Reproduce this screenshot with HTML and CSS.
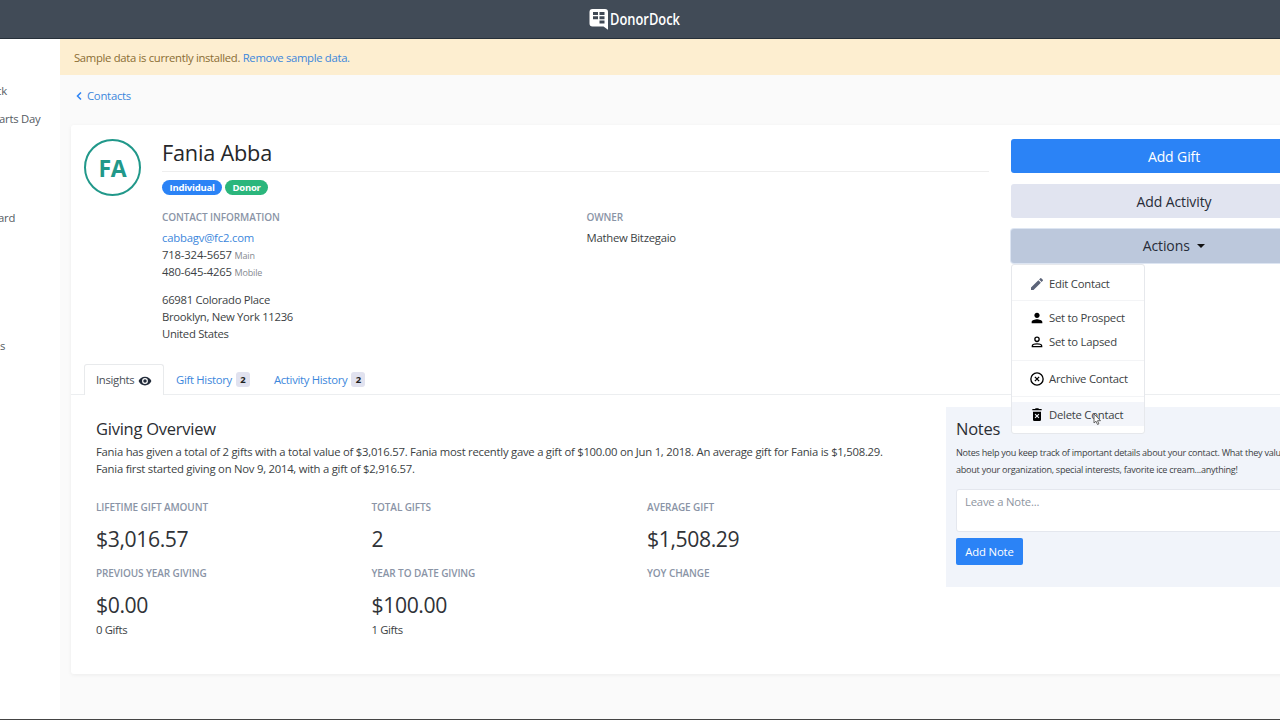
FILE: index.html
```html
<!DOCTYPE html>
<html lang="en">

<head>
    <meta charset="UTF-8">
    <meta name="viewport" content="width=device-width, initial-scale=1.0">
    <title>Fania Abba - DonorDock</title>
    <link rel="stylesheet" href="styles.css">
</head>

<body>

    <header class="navbar">
        <svg class="logo" width="92" height="24" viewBox="0 0 92 24">
            <path fill="#fff" d="M3.500 2h12.500a3 3 0 0 1 3 3v17.800l-4.500-3.300h-11a3 3 0 0 1-3-3v-11.500a3 3 0 0 1 3-3z" />
            <path fill="#3f4854" d="M4 5h5v3h-5zM10.500 5h5v3h-5zM4 9.300h5v3h-5zM10.500 9.300h5v3h-5zM10.500 13.600h5v3h-5z" />
            <text x="21" y="17.500" textLength="70" lengthAdjust="spacingAndGlyphs">DonorDock</text>
        </svg>
    </header>

    <div class="wrapper">
        <nav class="sidebar">
            <a class="side-link">ck</a>
            <a class="side-link">arts Day</a>
            <a class="side-link group-two">ard</a>
            <a class="side-link group-three">s</a>
        </nav>

        <main class="content">
            <div class="alert">Sample data is currently installed. <a href="#">Remove sample data.</a></div>

            <a href="#" class="back-link">
                <svg width="6" height="8" viewBox="0 0 6 8"><path d="M5 .5L1.500 4L5 7.500" fill="none" stroke="#2b83f6" stroke-width="1.500" /></svg>
                Contacts
            </a>

            <section class="card">
                <div class="profile">
                    <div class="avatar">FA</div>
                    <div class="details">
                        <h1>Fania Abba</h1>
                        <div class="badges">
                            <span class="badge blue">Individual</span>
                            <span class="badge green">Donor</span>
                        </div>
                        <div class="info">
                            <div class="info-col">
                                <h6>CONTACT INFORMATION</h6>
                                <a href="#" class="email">cabbagv@fc2.com</a>
                                <div class="phone">718-324-5657 <small>Main</small></div>
                                <div class="phone">480-645-4265 <small>Mobile</small></div>
                                <address>66981 Colorado Place<br>Brooklyn, New York 11236<br>United States</address>
                            </div>
                            <div class="info-col">
                                <h6>OWNER</h6>
                                <div class="owner">Mathew Bitzegaio</div>
                            </div>
                        </div>
                    </div>
                    <div class="actions">
                        <button class="btn primary">Add Gift</button>
                        <button class="btn light">Add Activity</button>
                        <div class="dropdown">
                            <button class="btn open">Actions <span class="caret"></span></button>
                            <div class="menu">
                                <a class="item">
                                    <svg width="16" height="16" viewBox="0 0 24 24" fill="#5c6479"><path d="M3 17.250V21h3.750L17.810 9.940l-3.750-3.750L3 17.250zM20.710 7.040a1 1 0 0 0 0-1.410l-2.340-2.340a1 1 0 0 0-1.410 0l-1.830 1.830 3.750 3.750 1.830-1.830z" /></svg>
                                    Edit Contact
                                </a>
                                <hr>
                                <a class="item">
                                    <svg width="16" height="16" viewBox="0 0 24 24"><path d="M12 12c2.210 0 4-1.790 4-4s-1.790-4-4-4-4 1.790-4 4 1.790 4 4 4zm0 2c-2.670 0-8 1.340-8 4v2h16v-2c0-2.660-5.330-4-8-4z" /></svg>
                                    Set to Prospect
                                </a>
                                <a class="item">
                                    <svg width="16" height="16" viewBox="0 0 24 24" fill="none" stroke="#000" stroke-width="2"><circle cx="12" cy="8" r="3.200" /><path d="M5 19v-1c0-2 4-3.200 7-3.200s7 1.200 7 3.200v1z" /></svg>
                                    Set to Lapsed
                                </a>
                                <hr class="second">
                                <a class="item">
                                    <svg width="16" height="16" viewBox="0 0 24 24" fill="none" stroke="#000" stroke-width="2"><circle cx="12" cy="12" r="9.200" /><path d="M8.800 8.800l6.400 6.400M15.200 8.800l-6.400 6.400" /></svg>
                                    Archive Contact
                                </a>
                                <hr class="third">
                                <a class="item active">
                                    <svg width="16" height="16" viewBox="0 0 24 24"><path fill-rule="evenodd" d="M5 3h4l1-1h4l1 1h4v2H5zM6 7h12v12a2 2 0 0 1-2 2H8a2 2 0 0 1-2-2zM8.500 11.200L10.800 13.500 8.500 15.800 9.700 17 12 14.700 14.300 17 15.500 15.800 13.200 13.500 15.500 11.200 14.300 10 12 12.300 9.700 10z" /></svg>
                                    Delete Contact
                                </a>
                                <svg class="cursor" width="9" height="13" viewBox="0 0 9 13"><path d="M1 1v9l2-1.800 1.500 3.300 1.400-.6-1.400-3.200h3z" fill="#fff" stroke="#555" stroke-width=".9" /></svg>
                            </div>
                        </div>
                    </div>
                </div>

                <div class="tabs">
                    <a class="tab current">Insights
                        <svg width="14" height="14" viewBox="0 0 24 24" fill="#222b3a"><path d="M12 4.500C7 4.500 2.730 7.610 1 12c1.730 4.390 6 7.500 11 7.500s9.270-3.110 11-7.500c-1.730-4.390-6-7.500-11-7.500zM12 17a5 5 0 1 1 0-10 5 5 0 0 1 0 10zm0-8a3 3 0 1 0 0 6 3 3 0 0 0 0-6z" /></svg>
                    </a>
                    <a class="tab">Gift History <span class="count">2</span></a>
                    <a class="tab">Activity History <span class="count">2</span></a>
                </div>

                <div class="tab-content">
                    <div class="overview">
                        <h2>Giving Overview</h2>
                        <p>Fania has given a total of 2 gifts with a total value of $3,016.57. Fania most recently gave a gift of $100.00 on Jun 1, 2018. An average gift for Fania is $1,508.29.<br>Fania first started giving on Nov 9, 2014, with a gift of $2,916.57.</p>
                        <div class="stats">
                            <div class="stat">
                                <h6>LIFETIME GIFT AMOUNT</h6>
                                <div class="value">$3,016.57</div>
                            </div>
                            <div class="stat">
                                <h6>TOTAL GIFTS</h6>
                                <div class="value">2</div>
                            </div>
                            <div class="stat">
                                <h6>AVERAGE GIFT</h6>
                                <div class="value">$1,508.29</div>
                            </div>
                            <div class="stat">
                                <h6>PREVIOUS YEAR GIVING</h6>
                                <div class="value">$0.00</div>
                                <div class="sub">0 Gifts</div>
                            </div>
                            <div class="stat">
                                <h6>YEAR TO DATE GIVING</h6>
                                <div class="value">$100.00</div>
                                <div class="sub">1 Gifts</div>
                            </div>
                            <div class="stat">
                                <h6>YOY CHANGE</h6>
                            </div>
                        </div>
                    </div>
                    <aside class="notes">
                        <h2>Notes</h2>
                        <p>Notes help you keep track of important details about your contact. What they value<br>about your organization, special interests, favorite ice cream...anything!</p>
                        <textarea placeholder="Leave a Note..."></textarea>
                        <button class="btn-note">Add Note</button>
                    </aside>
                </div>
            </section>
        </main>
    </div>

</body>

</html>
```

FILE: styles.css
```css
* {
    box-sizing: border-box;
}

body {
    margin: 0;
    height: 720px;
    overflow: hidden;
    display: flex;
    flex-direction: column;
    background-color: #fafafa;
    border-bottom: 1px solid #444;
    font-family: "Open Sans", sans-serif;
    font-size: 11.3px;
    letter-spacing: -0.245px;
    line-height: 17px;
    color: #3c3f44;
}

a {
    color: #3c87dc;
    text-decoration: none;
}

h1, h2, h6, p {
    margin: 0;
    font-weight: normal;
}

.navbar {
    height: 39px;
    flex: none;
    display: flex;
    justify-content: center;
    padding: 7px 10px 0 0;
    background-color: #414b57;
    border-bottom: 1px solid #26303a;
}

.logo {
    overflow: visible;
}

.logo text {
    fill: #fff;
    font-size: 15.5px;
    font-weight: 600;
    letter-spacing: 0;
}

.wrapper {
    display: flex;
    flex: 1;
    min-height: 0;
    overflow: hidden;
}

.sidebar {
    width: 60px;
    flex: none;
    background-color: #fff;
    padding-top: 38px;
}

.side-link {
    display: block;
    height: 28px;
    line-height: 28px;
    margin-left: -1px;
    color: #555b63;
    white-space: nowrap;
}

.side-link:first-child {
    margin-left: -4px;
}

.group-two {
    margin-top: 71px;
    margin-left: -2px;
}

.group-three {
    margin-top: 100px;
    margin-left: 0;
}

.content {
    width: 1300px;
    flex: none;
}

.alert {
    height: 36px;
    line-height: 37px;
    padding-left: 14px;
    background-color: #fdeed0;
    color: #8a6d33;
    letter-spacing: -0.32px;
}

.back-link {
    display: flex;
    align-items: center;
    gap: 5px;
    height: 17px;
    margin: 12px 0 21px 16px;
}

.card {
    width: 1278px;
    height: 549px;
    margin-left: 11px;
    background-color: #fff;
    border-radius: 3px;
    box-shadow: 0 1px 4px rgba(0, 0, 0, 0.06);
}

.profile {
    display: flex;
    height: 239px;
    padding: 14px 12px 0 13px;
}

.avatar {
    width: 57px;
    height: 57px;
    flex: none;
    border: 2px solid #21988a;
    border-radius: 50%;
    color: #21988a;
    font-size: 23px;
    font-weight: bold;
    line-height: 55px;
    text-align: center;
}

.details {
    width: 827px;
    margin-left: 21px;
}

h1 {
    height: 33px;
    border-bottom: 1px solid #eee;
    font-size: 21.7px;
    letter-spacing: -0.2px;
    line-height: 28px;
    color: #25272a;
}

.badges {
    display: flex;
    gap: 3px;
    margin-top: 8px;
}

.badge {
    height: 15px;
    padding: 0 7.5px;
    border-radius: 8px;
    color: #fff;
    font-size: 9.5px;
    font-weight: bold;
    line-height: 15px;
}

.blue {
    background-color: #2b83f6;
}

.green {
    background-color: #2bb67c;
}

.info {
    display: flex;
    margin-top: 14px;
}

.info-col {
    width: 424.5px;
    flex: none;
}

h6 {
    font-size: 10px;
    font-weight: 600;
    letter-spacing: -0.1px;
    line-height: 17px;
    color: #8a94a6;
}

.email,
.owner {
    display: block;
    margin-top: 3px;
}

.email {
    letter-spacing: -0.2px;
}

.phone {
    height: 17px;
    letter-spacing: -0.17px;
}

small {
    font-size: 9px;
    color: #85898f;
}

address {
    margin-top: 11px;
    font-style: normal;
    letter-spacing: -0.3px;
}

.actions {
    width: 326px;
    margin-left: 22px;
    display: flex;
    flex-direction: column;
    gap: 11px;
}

.btn {
    width: 100%;
    height: 34px;
    padding: 0;
    border: none;
    border-radius: 3px;
    font-family: inherit;
    font-size: 14px;
    letter-spacing: -0.1px;
    color: #272c38;
}

.primary {
    background-color: #2b83f6;
    color: #fff;
}

.light {
    background-color: #e1e4f0;
}

.open {
    padding-bottom: 1px;
    background-color: #bcc8dc;
    box-shadow: 0 0 0 1px #dde5f2;
}

.dropdown {
    position: relative;
}

.caret {
    display: inline-block;
    margin-left: 4px;
    vertical-align: 3px;
    border: 4px solid transparent;
    border-top-color: #111;
    border-bottom: 0;
}

.menu {
    position: absolute;
    top: 35px;
    left: 0;
    width: 134px;
    height: 170px;
    padding-top: 6px;
    background-color: #fff;
    border: 1px solid #e6e8ec;
    border-radius: 3px;
}

.item {
    display: flex;
    align-items: center;
    gap: 4px;
    height: 24px;
    padding-left: 17px;
    color: #3c3f44;
    white-space: nowrap;
}

.item svg {
    margin-top: 2px;
}

.menu hr {
    margin: 5px 0 4px;
    border: none;
    border-top: 1px solid #f3f4f6;
}

.menu .second {
    margin: 7px 0 5px;
}

.menu .third {
    margin: 6px 0 5px;
}

.active {
    background-color: #f3f5fa;
}

.cursor {
    position: absolute;
    left: 81px;
    top: 148px;
}

.tabs {
    display: flex;
    height: 31px;
    padding-left: 13px;
    border-bottom: 1px solid #eceef0;
}

.tab {
    display: flex;
    align-items: center;
    gap: 4px;
    height: 31px;
    padding: 0 12px;
    letter-spacing: -0.3px;
}

.current {
    width: 80px;
    background-color: #fff;
    border: 1px solid #e8eaec;
    border-bottom: none;
    border-radius: 3px 3px 0 0;
    padding: 0 0 1px 11px;
    color: #4a4f57;
}

.current svg {
    margin-top: 3px;
}

.count {
    width: 14px;
    height: 15px;
    border-radius: 3px;
    background-color: #e1e2ef;
    color: #222;
    font-size: 9.5px;
    font-weight: bold;
    line-height: 15px;
    text-align: center;
}

.tab-content {
    display: flex;
    padding: 12px 0 0 25px;
}

.overview {
    width: 850px;
    padding-top: 9px;
}

h2 {
    font-size: 16.5px;
    line-height: 25px;
    color: #2b2e33;
}

.overview p {
    margin-top: 2px;
    white-space: nowrap;
}

.stats {
    display: grid;
    grid-template-columns: repeat(3, 275.5px);
    margin-top: 22px;
}

.stat {
    min-height: 66px;
}

.value {
    margin-top: 7px;
    font-size: 21.2px;
    letter-spacing: -0.4px;
    line-height: 32px;
    color: #303338;
}

.sub {
    letter-spacing: -0.35px;
}

.notes {
    width: 400px;
    height: 180px;
    padding: 9px 10px 0;
    background-color: #f1f4fa;
}

.notes p {
    margin-top: 3px;
    font-size: 9.1px;
    letter-spacing: -0.27px;
    white-space: nowrap;
}

.notes textarea {
    display: block;
    width: 380px;
    height: 43px;
    margin-top: 11px;
    padding: 3px 8px;
    border: 1px solid #e4e7ee;
    border-radius: 3px;
    font: inherit;
    letter-spacing: -0.2px;
    resize: none;
}

.notes textarea::placeholder {
    color: #8e959f;
}

.btn-note {
    width: 67px;
    height: 27px;
    margin-top: 6px;
    padding: 0;
    border: none;
    border-radius: 2px;
    background-color: #2b83f6;
    color: #fff;
    font: inherit;
    font-weight: 500;
    letter-spacing: -0.15px;
}
```
